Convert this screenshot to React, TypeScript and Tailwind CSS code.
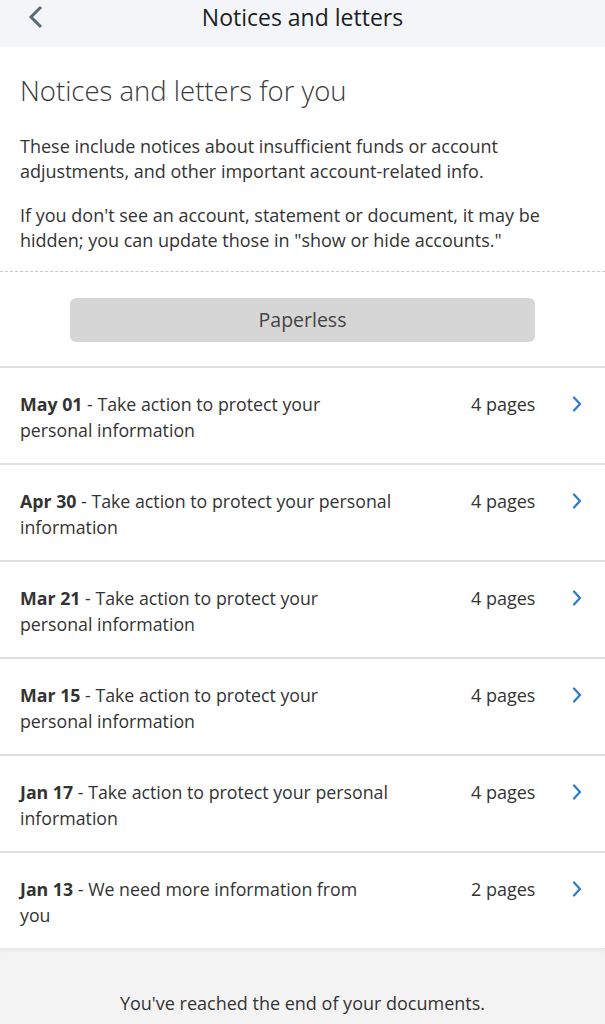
const docs = [
  { date: 'May 01', title: 'Take action to protect your personal information', pages: '4 pages' },
  { date: 'Apr 30', title: 'Take action to protect your personal information', pages: '4 pages' },
  { date: 'Mar 21', title: 'Take action to protect your personal information', pages: '4 pages' },
  { date: 'Mar 15', title: 'Take action to protect your personal information', pages: '4 pages' },
  { date: 'Jan 17', title: 'Take action to protect your personal information', pages: '4 pages' },
  { date: 'Jan 13', title: 'We need more information from you', pages: '2 pages' },
];

function ChevronRight() {
  return (
    <svg width="12" height="16" viewBox="0 0 12 16" fill="none">
      <path d="M3 1.5 L9 8 L3 14.5" stroke="#2b79d0" strokeWidth="2.2" strokeLinecap="round" strokeLinejoin="round" />
    </svg>
  );
}

export default function App() {
  return (
    <div className="w-[605px] h-[1024px] overflow-hidden bg-white text-[#333] font-['Open_Sans',sans-serif]">
      {/* Header */}
      <div className="h-[47px] bg-[#f4f5f9] relative flex items-center justify-center">
        <svg className="absolute left-[27px] top-[4px]" width="18" height="26" viewBox="0 0 18 26" fill="none">
          <path d="M14 3 L4 13 L14 23" stroke="#5b6b77" strokeWidth="3" strokeLinejoin="miter" />
        </svg>
        <h1 className="text-[23px] text-[#1b1f24] font-medium -mt-[12px]">Notices and letters</h1>
      </div>

      {/* Intro */}
      <div className="px-5 pt-[28px]">
        <h2 className="text-[27.5px] font-light leading-[32px] text-[#3a3a3a]">Notices and letters for you</h2>
        <p className="mt-[27px] text-[18px] leading-[25px]">
          These include notices about insufficient funds or account adjustments, and other important account-related info.
        </p>
        <p className="mt-[19px] text-[18px] leading-[25px]">
          If you don't see an account, statement or document, it may be hidden; you can update those in "show or hide accounts."
        </p>
      </div>
      <div className="mt-[18px] border-t border-dashed border-[#c8c8c8]" />

      {/* Paperless */}
      <div className="pt-[26px] pb-[24px] flex justify-center">
        <button className="w-[465px] h-[44px] rounded-[6px] bg-[#d6d6d6] text-[19.5px] text-[#444]">Paperless</button>
      </div>

      {/* List */}
      <div className="border-t-2 border-[#e0e0e0]">
        {docs.map((d, i) => (
          <div
            key={d.date}
            className={`flex items-start pl-5 pt-[23px] ${i < docs.length - 1 ? 'h-[97px] border-b-2 border-[#e0e0e0]' : 'h-[95px]'}`}
          >
            <div className="w-[371.5px] text-[17.75px] leading-[26px]">
              <span className="font-bold">{d.date}</span> - {d.title}
            </div>
            <div className="ml-auto text-[18px] leading-[26px] w-[66px] mr-[34px] whitespace-nowrap">{d.pages}</div>
            <div className="mr-[22px] mt-[5px]">
              <ChevronRight />
            </div>
          </div>
        ))}
      </div>

      {/* Footer */}
      <div className="bg-[#f3f3f3] h-[80px] shadow-[inset_0_4px_4px_-2px_rgba(0,0,0,0.06)] flex justify-center pt-[43px]">
        <p className="text-[18px] leading-[24px]">You've reached the end of your documents.</p>
      </div>
    </div>
  );
}
